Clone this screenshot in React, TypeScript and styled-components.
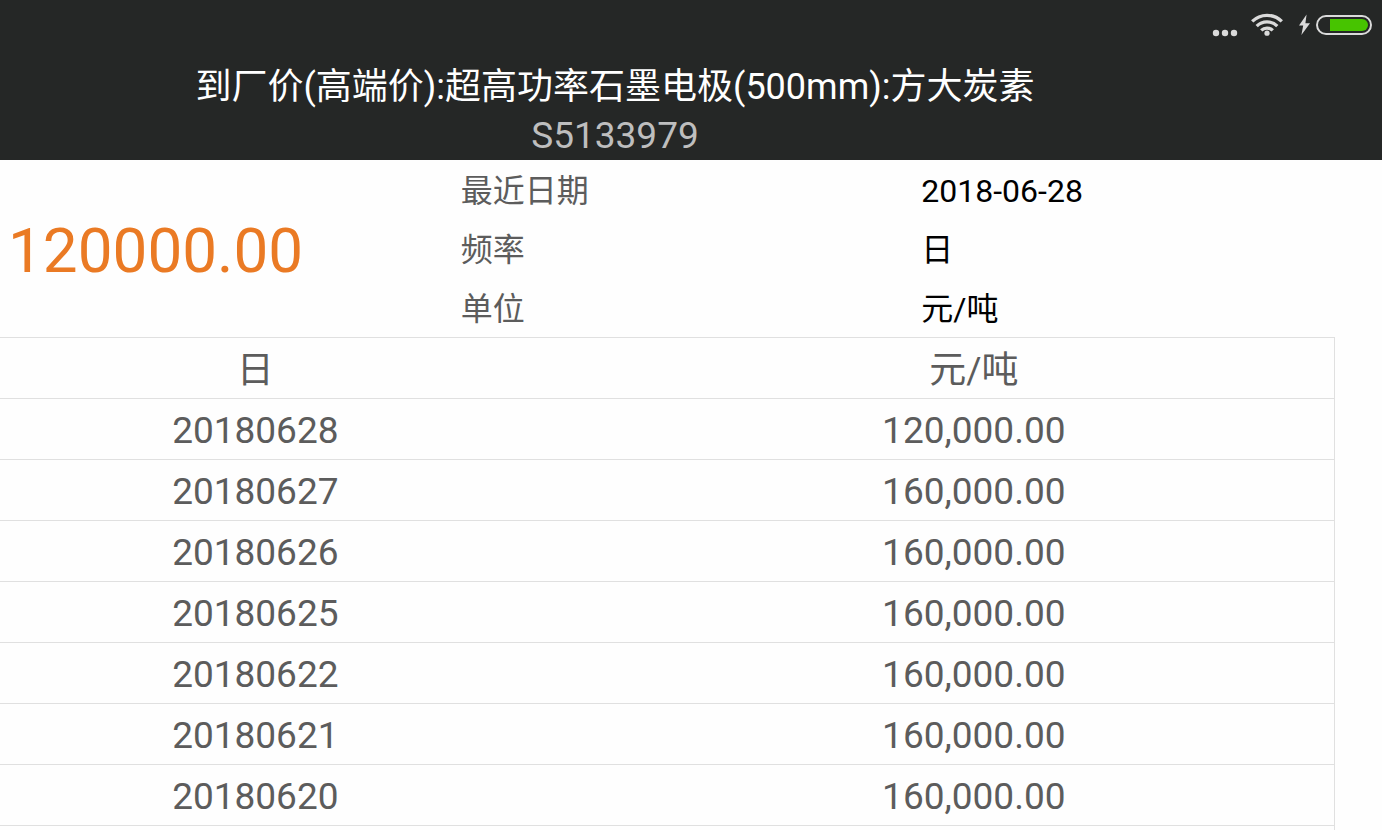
import React from 'react';
import styled, { createGlobalStyle } from 'styled-components';

const GlobalStyle = createGlobalStyle`
  * { box-sizing: border-box; }
  body {
    margin: 0;
    background: #fefefe;
    color: #5c5c5c;
    font-family: Roboto, "Noto Sans CJK SC", sans-serif;
  }
`;

const Page = styled.div`
  display: flex;
  flex-direction: column;
  min-height: 100vh;
`;

const Header = styled.header`
  background: #252726;
`;

const StatusBar = styled.div`
  display: flex;
  justify-content: flex-end;
  height: 62px;
  padding: 10px 10px 0 0;
`;

const StatusIcon = styled.svg<{ $gap?: number }>`
  display: block;
  flex: none;
  margin-left: ${(p) => p.$gap ?? 0}px;
`;

const Heading = styled.div`
  padding: 0 11% 0 0;
  text-align: center;
`;

const Title = styled.h1`
  margin: 0;
  color: #ffffff;
  font-size: 36px;
  font-weight: 400;
  line-height: 50px;
`;

const Code = styled.p`
  margin: 0;
  color: #bebebe;
  font-size: 37px;
  line-height: 48px;
`;

const Summary = styled.section`
  display: grid;
  grid-template-columns: 1fr 2fr;
  align-items: center;
`;

const Latest = styled.div`
  padding: 4px 0 0 8px;
  color: #ea7a24;
  font-size: 62px;
  line-height: 72px;
`;

const Facts = styled.dl`
  display: grid;
  grid-template-columns: 1fr 1fr;
  margin: 0;
  font-size: 32px;
  line-height: 55px;
`;

const Term = styled.dt`
  padding-top: 4px;
`;

const Value = styled.dd`
  margin: 0;
  padding-top: 4px;
  color: #000000;
`;

const TableArea = styled.main`
  flex: 1;
  margin-right: 47px;
  border-top: 1px solid #e0e0e0;
  border-right: 1px solid #e0e0e0;
`;

const Table = styled.table`
  width: 100%;
  border-collapse: separate;
  border-spacing: 0;
  table-layout: fixed;
  font-size: 37px;
  text-align: center;
`;

const headCell = `
  border-bottom: 1px solid #e0e0e0;
  font-weight: 400;
  line-height: 54px;
`;

const bodyCell = `
  border-bottom: 1px solid #e0e0e0;
  line-height: 56px;
`;

const DateHead = styled.th`
  ${headCell}
  width: 46%;
  padding: 6px 103px 0 0;
`;

const PriceHead = styled.th`
  ${headCell}
  padding: 6px 0 0;
`;

const DateCell = styled.td`
  ${bodyCell}
  padding: 4px 103px 0 0;
`;

const PriceCell = styled.td`
  ${bodyCell}
  padding: 4px 0 0;
`;

const facts = [
  ['最近日期', '2018-06-28'],
  ['频率', '日'],
  ['单位', '元/吨'],
];

const rows = [
  ['20180628', '120,000.00'],
  ['20180627', '160,000.00'],
  ['20180626', '160,000.00'],
  ['20180625', '160,000.00'],
  ['20180622', '160,000.00'],
  ['20180621', '160,000.00'],
  ['20180620', '160,000.00'],
];

const Dots = () => (
  <StatusIcon width="26" height="30" viewBox="0 0 26 30" fill="#dadada" aria-hidden="true">
    <circle cx="4" cy="23" r="3.2" />
    <circle cx="13" cy="23" r="3.2" />
    <circle cx="22" cy="23" r="3.2" />
  </StatusIcon>
);

const Wifi = () => (
  <StatusIcon $gap={12} width="34" height="30" viewBox="0 0 34 30" fill="none" stroke="#dadada" strokeWidth="3.3" aria-hidden="true">
    <path d="M2.2 11.4A21 21 0 0 1 31.8 11.4" />
    <path d="M6.7 16.1A14.6 14.6 0 0 1 27.3 16.1" />
    <path d="M11.2 20.4A8.4 8.4 0 0 1 22.8 20.4" />
    <circle cx="17" cy="23.2" r="2.6" fill="#dadada" stroke="none" />
  </StatusIcon>
);

const Bolt = () => (
  <StatusIcon $gap={14} width="14" height="30" viewBox="0 0 14 30" fill="#dadada" aria-hidden="true">
    <path d="M8.6 4.6L1 15.4h4.2L3.4 25 12 13.2H7.4z" />
  </StatusIcon>
);

const Battery = () => (
  <StatusIcon $gap={4} width="56" height="30" viewBox="0 0 56 30" aria-hidden="true">
    <rect x="1" y="6" width="54" height="18" rx="9" fill="none" stroke="#dadada" strokeWidth="2" />
    <path d="M14 9h32a6 6 0 0 1 0 12H14z" fill="#47c400" />
  </StatusIcon>
);

export default function App() {
  return (
    <Page>
      <GlobalStyle />
      <Header>
        <StatusBar>
          <Dots />
          <Wifi />
          <Bolt />
          <Battery />
        </StatusBar>
        <Heading>
          <Title>到厂价(高端价):超高功率石墨电极(500mm):方大炭素</Title>
          <Code>S5133979</Code>
        </Heading>
      </Header>
      <Summary>
        <Latest>120000.00</Latest>
        <Facts>
          {facts.map(([term, value]) => (
            <React.Fragment key={term}>
              <Term>{term}</Term>
              <Value>{value}</Value>
            </React.Fragment>
          ))}
        </Facts>
      </Summary>
      <TableArea>
        <Table>
          <thead>
            <tr>
              <DateHead scope="col">日</DateHead>
              <PriceHead scope="col">元/吨</PriceHead>
            </tr>
          </thead>
          <tbody>
            {rows.map(([date, price]) => (
              <tr key={date}>
                <DateCell>{date}</DateCell>
                <PriceCell>{price}</PriceCell>
              </tr>
            ))}
          </tbody>
        </Table>
      </TableArea>
    </Page>
  );
}
